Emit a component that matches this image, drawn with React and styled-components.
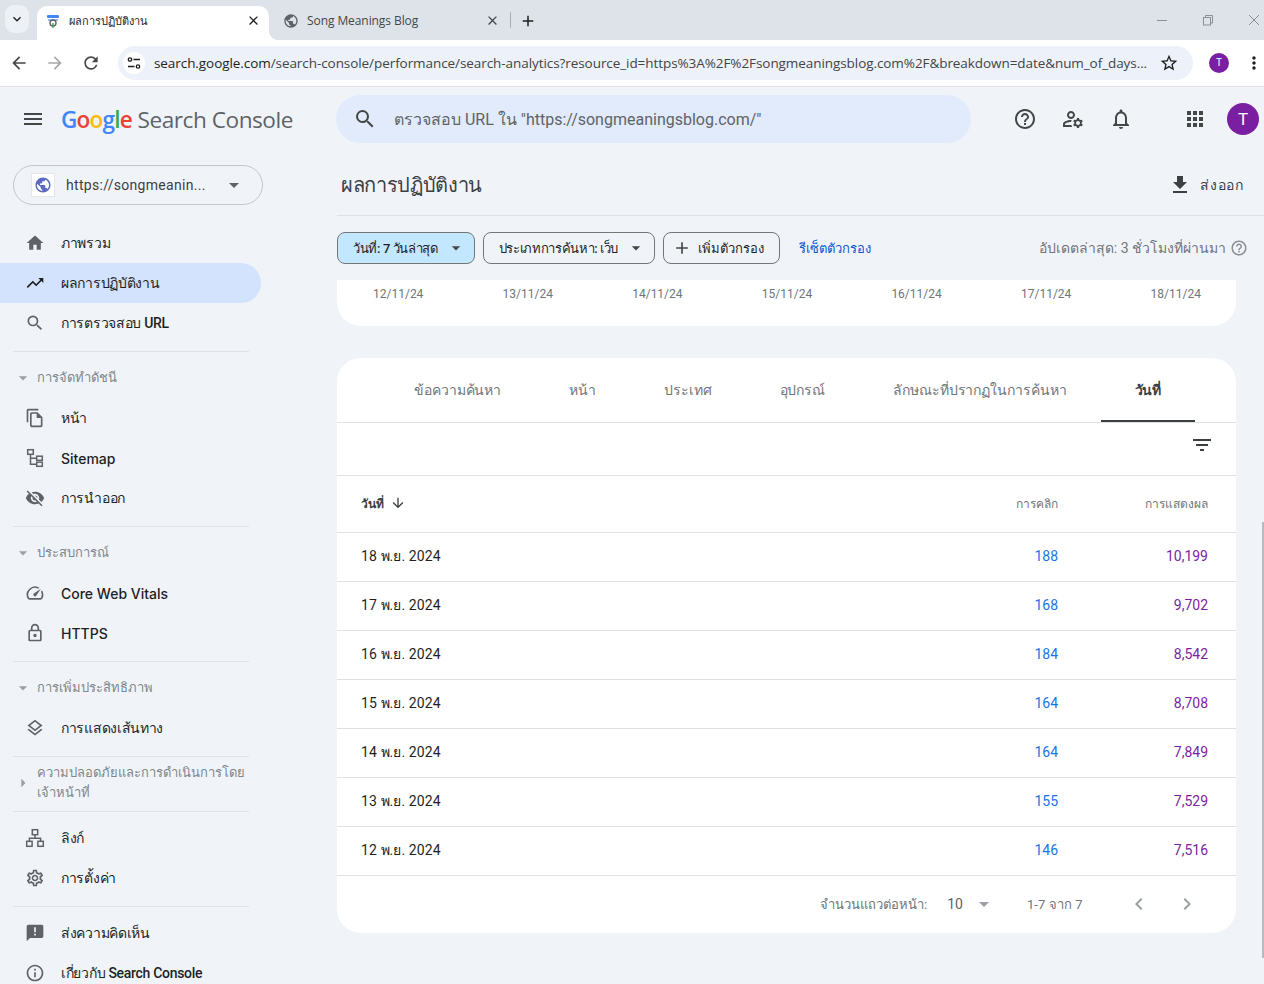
import React from 'react';
import styled, { createGlobalStyle } from 'styled-components';
import {
  MdAdd, MdApps, MdArrowBack, MdArrowDownward, MdArrowDropDown, MdArrowForward, MdChevronLeft, MdChevronRight,
  MdClose, MdFileDownload, MdFilterList, MdHelpOutline, MdHome, MdInfoOutline, MdKeyboardArrowDown, MdMenu,
  MdMoreVert, MdOutlineFileCopy, MdOutlineLayers, MdOutlineLock, MdOutlineManageAccounts,
  MdOutlineNotifications, MdOutlineSettings, MdOutlineSpeed, MdPublic, MdRefresh, MdSearch, MdStarBorder,
  MdTrendingUp, MdVisibilityOff, MdAnnouncement, MdArrowRight,
} from 'react-icons/md';

const GlobalStyle = createGlobalStyle`
  html, body { margin: 0; padding: 0; height: 100%; overflow: hidden; }
  body { background: #f0f4f9; font-family: Roboto, "Noto Sans", "Liberation Sans", sans-serif; color: #1f1f1f; }
  * { box-sizing: border-box; }
`;

const Page = styled.div`
  width: 1264px;
  height: 984px;
  overflow: hidden;
  position: relative;
  display: flex;
  flex-direction: column;
`;

// browser chrome
const TabStrip = styled.div`
  height: 40px;
  flex: none;
  background: #dee3ea;
  display: flex;
  align-items: flex-end;
  padding-left: 5px;
  color: #444746;
`;

const TabListButton = styled.div`
  width: 24px;
  height: 28px;
  margin: 0 8px 7px 0;
  border-radius: 9px;
  background: #edf1f6;
  display: flex;
  align-items: center;
  justify-content: center;
  font-size: 16px;
  color: #1f1f1f;
`;

const ActiveTab = styled.div`
  width: 232px;
  height: 34px;
  background: #fff;
  border-radius: 10px 10px 0 0;
  display: flex;
  align-items: center;
  padding: 0 8px 5px 9px;
  font-size: 11px;
  color: #1f1f1f;
  position: relative;

  &::after {
    content: '';
    position: absolute;
    right: -10px;
    bottom: 0;
    width: 10px;
    height: 10px;
    background: radial-gradient(circle at 100% 0, transparent 10px, #fff 10.5px);
  }
`;

const TabTitle = styled.span`
  flex: 1;
  margin-left: 9px;
  white-space: nowrap;
`;

const IdleTab = styled.div`
  width: 231px;
  height: 34px;
  display: flex;
  align-items: center;
  padding: 0 0 5px 14px;
  font-size: 12px;
  color: #444746;
`;

const IdleTabTitle = styled.span`
  flex: 1;
  margin-left: 8px;
  font-family: "Open Sans", sans-serif;
  letter-spacing: -0.08px;
`;

const TabDivider = styled.div`
  width: 1px;
  height: 16px;
  margin: 0 8px 12px 10px;
  background: #a8acb2;
`;

const NewTab = styled.div`
  height: 34px;
  display: flex;
  align-items: center;
  padding-bottom: 5px;
  font-size: 18px;
  color: #1f1f1f;
`;

const WindowControls = styled.div`
  margin-left: auto;
  margin-right: -13px;
  height: 40px;
  display: flex;
  align-items: center;
  color: #8b8f94;
`;

const WindowButton = styled.div`
  width: 46px;
  display: flex;
  justify-content: center;
`;

const Toolbar = styled.div`
  height: 47px;
  flex: none;
  background: #fff;
  border-bottom: 1px solid #e0e2e5;
  display: flex;
  align-items: center;
  padding: 0 0 1px 8px;
`;

const NavButton = styled.div`
  width: 22px;
  margin-right: 14px;
  display: flex;
  justify-content: center;
  font-size: 20px;
  color: ${(p) => (p.$off ? '#a6a8ab' : '#474747')};
`;

const Omnibox = styled.div`
  width: 1075px;
  height: 34px;
  margin-left: 2px;
  border-radius: 17px;
  background: #edf2fa;
  display: flex;
  align-items: center;
  padding: 0 14px 0 5px;
`;

const SiteChip = styled.div`
  width: 22px;
  height: 22px;
  border-radius: 50%;
  background: #fff;
  display: flex;
  align-items: center;
  justify-content: center;
  color: #1f1f1f;
`;

const UrlText = styled.div`
  flex: 1;
  min-width: 0;
  margin-left: 9px;
  font-family: "Open Sans", sans-serif;
  font-size: 13.5px;
  letter-spacing: -0.07px;
  color: #444;
  white-space: nowrap;
  overflow: hidden;
`;

const UrlHost = styled.span`
  color: #1f1f1f;
`;

const ToolbarEnd = styled.div`
  display: flex;
  align-items: center;
  font-size: 20px;
  color: #1f1f1f;
`;

const SmallAvatar = styled.div`
  width: 20px;
  height: 20px;
  margin: 0 15px 0 16px;
  border-radius: 50%;
  background: #7b1fa2;
  color: #fff;
  font-size: 10px;
  display: flex;
  align-items: center;
  justify-content: center;
`;

// search console header
const TopBar = styled.header`
  height: 64px;
  flex: none;
  display: flex;
  align-items: center;
  padding: 0 21px 0 21px;
`;

const MenuIcon = styled.div`
  width: 24px;
  flex: none;
  display: flex;
  font-size: 24px;
  color: #444746;
`;

const Logo = styled.div`
  width: 291px;
  flex: none;
  margin-left: 16px;
  font-family: "Open Sans", Roboto, sans-serif;
  font-size: 22.6px;
  letter-spacing: -0.45px;
  color: #5f6368;
  white-space: nowrap;
`;

const LogoLetter = styled.span`
  color: ${(p) => p.$c};
  font-weight: 600;
  letter-spacing: -0.8px;
`;

const SearchBox = styled.div`
  width: 635px;
  height: 48px;
  flex: none;
  margin-left: -16px;
  border-radius: 24px;
  background: #e2ebfb;
  display: flex;
  align-items: center;
  padding-left: 17px;
  font-size: 16px;
  color: #5f6368;
`;

const SearchBoxIcon = styled.div`
  display: flex;
  font-size: 24px;
  margin-right: 17px;
  color: #444746;
`;

const TopIcons = styled.div`
  margin-left: 42px;
  display: flex;
  align-items: center;
  color: #444746;
  font-size: 24px;
`;

const TopIcon = styled.div`
  width: 24px;
  height: 24px;
  flex: none;
  display: flex;
  margin-right: ${(p) => p.$gap ?? 24}px;
`;

const Avatar = styled.div`
  width: 32px;
  height: 32px;
  flex: none;
  margin-left: -4px;
  border-radius: 50%;
  background: #7b1fa2;
  color: #fff;
  font-size: 17px;
  display: flex;
  align-items: center;
  justify-content: center;
`;

const Columns = styled.div`
  flex: 1;
  min-height: 0;
  display: flex;
`;

// sidebar
const Sidebar = styled.nav`
  width: 337px;
  flex: none;
  padding-top: 14px;
`;

const PropertyPicker = styled.div`
  width: 250px;
  height: 40px;
  margin: 0 0 18px 13px;
  border: 1px solid #c4c7c5;
  border-radius: 20px;
  display: flex;
  align-items: center;
  padding-left: 17px;
  font-size: 14px;
  color: #3c4043;
  letter-spacing: 0.3px;
`;

const GlobeBox = styled.div`
  width: 24px;
  height: 24px;
  background: #fff;
  border: 1px solid #e4e6e8;
  display: flex;
  align-items: center;
  justify-content: center;
  font-size: 18px;
  color: #5c6bc0;
`;

const PropertyName = styled.span`
  margin-left: 11px;
  width: 156px;
`;

const PickerCaret = styled.div`
  display: flex;
  font-size: 24px;
  color: #5f6368;
`;

const Item = styled.div`
  width: 261px;
  height: 40px;
  display: flex;
  align-items: center;
  padding-left: 25px;
  border-radius: 0 20px 20px 0;
  background: ${(p) => (p.$active ? '#d3e3fd' : 'transparent')};
  font-family: ${(p) => (p.$latin ? 'Inter, Roboto, sans-serif' : 'Roboto, sans-serif')};
  font-size: 14px;
  font-weight: 500;
  letter-spacing: ${(p) => (p.$latin ? '0' : '-0.3px')};
  color: #1f1f1f;
`;

const ItemIcon = styled.div`
  width: 20px;
  height: 20px;
  margin-right: 16px;
  display: flex;
  font-size: 20px;
  color: ${(p) => (p.$active ? '#1f1f1f' : '#5f6368')};
`;

const SideDivider = styled.div`
  width: 236px;
  height: 1px;
  margin: ${(p) => p.$m || '8px 0 0 13px'};
  background: #dfe2e6;
`;

const Section = styled.div`
  display: flex;
  align-items: center;
  width: 249px;
  padding: ${(p) => p.$p || '16px 0 10px 13px'};
  font-size: 13px;
  font-weight: 500;
  line-height: 20px;
  color: #80868b;
`;

const SectionCaret = styled.div`
  width: 20px;
  height: 20px;
  margin-right: 4px;
  display: flex;
  flex: none;
  font-size: 20px;
  color: #9aa0a6;
`;

// main column
const Main = styled.main`
  flex: 1;
  min-width: 0;
  padding-top: 14px;
  position: relative;
`;

const TitleRow = styled.div`
  height: 51px;
  border-bottom: 1px solid #dfe2e6;
  display: flex;
  align-items: center;
  justify-content: space-between;
  padding: 0 20px 11px 4px;
`;

const Title = styled.h1`
  margin: 0;
  font-size: 20px;
  font-weight: 500;
  letter-spacing: -0.35px;
  color: #3c4043;
`;

const ExportButton = styled.div`
  display: flex;
  align-items: center;
  font-size: 14px;
  letter-spacing: 0.8px;
  color: #3c4043;
`;

const ExportIcon = styled.div`
  display: flex;
  font-size: 24px;
  margin-right: 8px;
  color: #3c4043;
`;

const FilterRow = styled.div`
  height: 64px;
  display: flex;
  align-items: center;
  gap: 8px;
  padding-right: 16px;
`;

const Chip = styled.div`
  height: 32px;
  border: 1px solid #747775;
  border-radius: 8px;
  background: ${(p) => (p.$on ? '#c2e7ff' : 'transparent')};
  display: flex;
  align-items: center;
  padding: ${(p) => p.$p};
  font-size: 13px;
  font-weight: 500;
  letter-spacing: ${(p) => p.$ls || '-0.2px'};
  color: #1f1f1f;
  white-space: nowrap;
`;

const ChipIcon = styled.div`
  display: flex;
  font-size: 20px;
  margin: ${(p) => p.$m};
  color: #444746;
`;

const ResetLink = styled.div`
  margin-left: 11px;
  font-size: 13px;
  font-weight: 500;
  color: #0b57d0;
`;

const Updated = styled.div`
  margin-left: auto;
  display: flex;
  align-items: center;
  font-size: 14px;
  color: #70757a;
`;

const UpdatedIcon = styled.div`
  display: flex;
  font-size: 18px;
  margin-left: 4px;
  color: #8a8e92;
`;

const Content = styled.div`
  padding-right: 28px;
`;

const ChartTail = styled.div`
  height: 46px;
  background: #fff;
  border-radius: 0 0 24px 24px;
  display: flex;
  justify-content: space-between;
  padding: 7px 35px 0 36px;
  font-size: 12px;
  line-height: 14px;
  color: #70757a;
`;

const TableCard = styled.section`
  margin-top: 32px;
  height: 575px;
  background: #fff;
  border-radius: 24px;
  overflow: hidden;
`;

const Tabs = styled.div`
  height: 65px;
  border-bottom: 1px solid #e0e0e0;
  display: flex;
  padding-left: 43px;
`;

const Tab = styled.div`
  height: 64px;
  padding: 2px 34px 0;
  display: flex;
  align-items: center;
  font-size: 14px;
  font-weight: ${(p) => (p.$active ? 700 : 500)};
  letter-spacing: -0.08px;
  color: ${(p) => (p.$active ? '#3c4043' : '#70757a')};
  border-bottom: 2px solid ${(p) => (p.$active ? '#3c4043' : 'transparent')};
  white-space: nowrap;
`;

const TableFilter = styled.div`
  height: 53px;
  border-bottom: 1px solid #e0e0e0;
  display: flex;
  justify-content: flex-end;
  align-items: center;
  padding: 0 22px 8px 0;
  font-size: 24px;
  color: #3c4043;
`;

const FilterIcon = styled.div`
  display: flex;
`;

const Row = styled.div`
  height: ${(p) => (p.$head ? 57 : 49)}px;
  border-bottom: 1px solid #e0e0e0;
  display: grid;
  grid-template-columns: 1fr 120px 150px;
  align-items: center;
  padding: 0 28px 2px 24px;
`;

const DateCell = styled.div`
  font-size: 14px;
  color: #1f1f1f;
  letter-spacing: 0.1px;
`;

const HeadDate = styled.div`
  display: flex;
  align-items: center;
  font-size: 12px;
  font-weight: 700;
  color: #3c4043;
`;

const SortIcon = styled.div`
  display: flex;
  font-size: 16px;
  margin-left: 6px;
`;

const HeadCell = styled.div`
  text-align: right;
  font-size: 12px;
  color: #70757a;
`;

const Num = styled.div`
  text-align: right;
  font-size: 14px;
  color: ${(p) => (p.$purple ? '#7b1fa2' : '#1a73e8')};
`;

const Pager = styled.div`
  height: 56px;
  display: flex;
  align-items: center;
  padding-left: 483px;
  font-size: 13px;
  color: #70757a;
`;

const PerPage = styled.span`
  margin-left: 20px;
  font-size: 14px;
  color: #5f6368;
`;

const PagerCaret = styled.div`
  display: flex;
  font-size: 24px;
  margin-left: 9px;
  color: #9aa0a6;
`;

const PagerRange = styled.span`
  margin-left: 31px;
  letter-spacing: 0.1px;
`;

const PagerArrow = styled.div`
  display: flex;
  font-size: 24px;
  margin-left: ${(p) => p.$gap}px;
  color: #9aa0a6;
`;

const ScrollThumb = styled.div`
  position: absolute;
  right: 0;
  top: 371px;
  width: 2px;
  height: 436px;
  background: #b9bbbe;
`;

const TabFavicon = () => (
  <svg width="14" height="14" viewBox="0 0 14 14">
    <rect x="1" y="1" width="12" height="3" rx="1" fill="#4285f4" />
    <rect x="2" y="5" width="10" height="2" fill="#9ab8ef" />
    <circle cx="7" cy="9" r="3" fill="none" stroke="#5f6368" strokeWidth="1.4" />
    <path d="M7 9v5" stroke="#34a853" strokeWidth="1.4" />
  </svg>
);

const SiteControlsIcon = () => (
  <svg width="14" height="14" viewBox="0 0 14 14" fill="none" stroke="currentColor" strokeWidth="1.3">
    <circle cx="3" cy="3.5" r="1.7" />
    <path d="M6.5 3.5H13M1 10.5H7.5" />
    <circle cx="11" cy="10.5" r="1.7" />
  </svg>
);

const MinimizeIcon = () => (
  <svg width="12" height="12" viewBox="0 0 12 12" stroke="currentColor"><path d="M1 6.5H11" /></svg>
);

const RestoreIcon = () => (
  <svg width="12" height="12" viewBox="0 0 12 12" fill="none" stroke="currentColor">
    <rect x="1.5" y="3.5" width="7" height="7.5" />
    <path d="M3.5 3.5V1.5H10.5V9H8.5" />
  </svg>
);

const CloseThinIcon = () => (
  <svg width="12" height="12" viewBox="0 0 12 12" stroke="currentColor"><path d="M1 1L11 11M11 1L1 11" /></svg>
);

const SitemapIcon = () => (
  <svg width="20" height="20" viewBox="0 0 20 20" fill="none" stroke="currentColor" strokeWidth="1.5">
    <rect x="2.7" y="1.7" width="5.6" height="4.6" />
    <rect x="11.7" y="8.2" width="5.6" height="4.1" />
    <rect x="11.7" y="14.2" width="5.6" height="4.1" />
    <path d="M5.5 6.3V16.2H11.7M5.5 10.2H11.7" />
  </svg>
);

const LinksIcon = () => (
  <svg width="20" height="20" viewBox="0 0 20 20" fill="none" stroke="currentColor" strokeWidth="1.5">
    <rect x="7.3" y="1.7" width="5.4" height="5" />
    <rect x="1.7" y="13.3" width="5.4" height="5" />
    <rect x="12.9" y="13.3" width="5.4" height="5" />
    <path d="M10 6.7V10.2M4.4 13.3V10.2H15.6V13.3" />
  </svg>
);

const clicks = [
  ['18 พ.ย. 2024', '188', '10,199'],
  ['17 พ.ย. 2024', '168', '9,702'],
  ['16 พ.ย. 2024', '184', '8,542'],
  ['15 พ.ย. 2024', '164', '8,708'],
  ['14 พ.ย. 2024', '164', '7,849'],
  ['13 พ.ย. 2024', '155', '7,529'],
  ['12 พ.ย. 2024', '146', '7,516'],
];

const chartDates = ['12/11/24', '13/11/24', '14/11/24', '15/11/24', '16/11/24', '17/11/24', '18/11/24'];
const tabs = ['ข้อความค้นหา', 'หน้า', 'ประเทศ', 'อุปกรณ์', 'ลักษณะที่ปรากฏในการค้นหา'];

const NavItem = ({ icon: Icon, children, active, latin }) => (
  <Item $active={active} $latin={latin}>
    <ItemIcon $active={active}><Icon /></ItemIcon>
    {children}
  </Item>
);

const NavSection = ({ children, closed, p }) => (
  <Section $p={p}>
    <SectionCaret>{closed ? <MdArrowRight /> : <MdArrowDropDown />}</SectionCaret>
    <span>{children}</span>
  </Section>
);

export default function App() {
  return (
    <Page>
      <GlobalStyle />
      <TabStrip>
        <TabListButton><MdKeyboardArrowDown /></TabListButton>
        <ActiveTab>
          <TabFavicon />
          <TabTitle>ผลการปฏิบัติงาน</TabTitle>
          <MdClose size={15} />
        </ActiveTab>
        <IdleTab>
          <MdPublic size={16} color="#5f6368" />
          <IdleTabTitle>Song Meanings Blog</IdleTabTitle>
          <MdClose size={15} />
        </IdleTab>
        <TabDivider />
        <NewTab><MdAdd /></NewTab>
        <WindowControls>
          <WindowButton><MinimizeIcon /></WindowButton>
          <WindowButton><RestoreIcon /></WindowButton>
          <WindowButton><CloseThinIcon /></WindowButton>
        </WindowControls>
      </TabStrip>
      <Toolbar>
        <NavButton><MdArrowBack /></NavButton>
        <NavButton $off><MdArrowForward /></NavButton>
        <NavButton><MdRefresh /></NavButton>
        <Omnibox>
          <SiteChip><SiteControlsIcon /></SiteChip>
          <UrlText>
            <UrlHost>search.google.com</UrlHost>/search-console/performance/search-analytics?resource_id=https%3A%2F%2Fsongmeaningsblog.com%2F&amp;breakdown=date&amp;num_of_days...
          </UrlText>
          <MdStarBorder size={20} color="#1f1f1f" />
        </Omnibox>
        <ToolbarEnd>
          <SmallAvatar>T</SmallAvatar>
          <MdMoreVert />
        </ToolbarEnd>
      </Toolbar>

      <TopBar>
        <MenuIcon><MdMenu /></MenuIcon>
        <Logo>
          <LogoLetter $c="#4285f4">G</LogoLetter>
          <LogoLetter $c="#ea4335">o</LogoLetter>
          <LogoLetter $c="#fbbc05">o</LogoLetter>
          <LogoLetter $c="#4285f4">g</LogoLetter>
          <LogoLetter $c="#34a853">l</LogoLetter>
          <LogoLetter $c="#ea4335">e</LogoLetter> Search Console
        </Logo>
        <SearchBox>
          <SearchBoxIcon><MdSearch /></SearchBoxIcon>
          ตรวจสอบ URL ใน "https://songmeaningsblog.com/"
        </SearchBox>
        <TopIcons>
          <TopIcon><MdHelpOutline /></TopIcon>
          <TopIcon><MdOutlineManageAccounts /></TopIcon>
          <TopIcon $gap={50}><MdOutlineNotifications /></TopIcon>
          <TopIcon><MdApps /></TopIcon>
          <Avatar>T</Avatar>
        </TopIcons>
      </TopBar>

      <Columns>
        <Sidebar>
          <PropertyPicker>
            <GlobeBox><MdPublic /></GlobeBox>
            <PropertyName>https://songmeanin...</PropertyName>
            <PickerCaret><MdArrowDropDown /></PickerCaret>
          </PropertyPicker>
          <NavItem icon={MdHome}>ภาพรวม</NavItem>
          <NavItem icon={MdTrendingUp} active>ผลการปฏิบัติงาน</NavItem>
          <NavItem icon={MdSearch}>การตรวจสอบ URL</NavItem>
          <SideDivider />
          <NavSection>การจัดทำดัชนี</NavSection>
          <NavItem icon={MdOutlineFileCopy}>หน้า</NavItem>
          <NavItem icon={SitemapIcon} latin>Sitemap</NavItem>
          <NavItem icon={MdVisibilityOff}>การนำออก</NavItem>
          <SideDivider />
          <NavSection>ประสบการณ์</NavSection>
          <NavItem icon={MdOutlineSpeed} latin>Core Web Vitals</NavItem>
          <NavItem icon={MdOutlineLock} latin>HTTPS</NavItem>
          <SideDivider />
          <NavSection>การเพิ่มประสิทธิภาพ</NavSection>
          <NavItem icon={MdOutlineLayers}>การแสดงเส้นทาง</NavItem>
          <SideDivider />
          <NavSection closed p="6px 0 8px 13px">ความปลอดภัยและการดำเนินการโดยเจ้าหน้าที่</NavSection>
          <SideDivider $m="0 0 6px 13px" />
          <NavItem icon={LinksIcon}>ลิงก์</NavItem>
          <NavItem icon={MdOutlineSettings}>การตั้งค่า</NavItem>
          <SideDivider $m="8px 0 6px 13px" />
          <NavItem icon={MdAnnouncement}>ส่งความคิดเห็น</NavItem>
          <NavItem icon={MdInfoOutline}>เกี่ยวกับ Search Console</NavItem>
        </Sidebar>

        <Main>
          <TitleRow>
            <Title>ผลการปฏิบัติงาน</Title>
            <ExportButton>
              <ExportIcon><MdFileDownload /></ExportIcon>
              ส่งออก
            </ExportButton>
          </TitleRow>
          <FilterRow>
            <Chip $on $p="0 8px 0 15px" $ls="-0.35px">
              วันที่: 7 วันล่าสุด
              <ChipIcon $m="0 0 0 8px"><MdArrowDropDown /></ChipIcon>
            </Chip>
            <Chip $p="0 8px 0 15px" $ls="-0.35px">
              ประเภทการค้นหา: เว็บ
              <ChipIcon $m="0 0 0 8px"><MdArrowDropDown /></ChipIcon>
            </Chip>
            <Chip $p="0 15px 0 8px" $ls="0">
              <ChipIcon $m="0 6px 0 0"><MdAdd /></ChipIcon>
              เพิ่มตัวกรอง
            </Chip>
            <ResetLink>รีเซ็ตตัวกรอง</ResetLink>
            <Updated>
              อัปเดตล่าสุด: 3 ชั่วโมงที่ผ่านมา
              <UpdatedIcon><MdHelpOutline /></UpdatedIcon>
            </Updated>
          </FilterRow>
          <Content>
            <ChartTail>
              {chartDates.map((d) => <span key={d}>{d}</span>)}
            </ChartTail>
            <TableCard>
              <Tabs>
                {tabs.map((t) => <Tab key={t}>{t}</Tab>)}
                <Tab $active>วันที่</Tab>
              </Tabs>
              <TableFilter><FilterIcon><MdFilterList /></FilterIcon></TableFilter>
              <Row $head>
                <HeadDate>วันที่<SortIcon><MdArrowDownward /></SortIcon></HeadDate>
                <HeadCell>การคลิก</HeadCell>
                <HeadCell>การแสดงผล</HeadCell>
              </Row>
              {clicks.map(([date, c, imp]) => (
                <Row key={date}>
                  <DateCell>{date}</DateCell>
                  <Num>{c}</Num>
                  <Num $purple>{imp}</Num>
                </Row>
              ))}
              <Pager>
                จำนวนแถวต่อหน้า:
                <PerPage>10</PerPage>
                <PagerCaret><MdArrowDropDown /></PagerCaret>
                <PagerRange>1-7 จาก 7</PagerRange>
                <PagerArrow $gap={44}><MdChevronLeft /></PagerArrow>
                <PagerArrow $gap={24}><MdChevronRight /></PagerArrow>
              </Pager>
            </TableCard>
          </Content>
          <ScrollThumb />
        </Main>
      </Columns>
    </Page>
  );
}
